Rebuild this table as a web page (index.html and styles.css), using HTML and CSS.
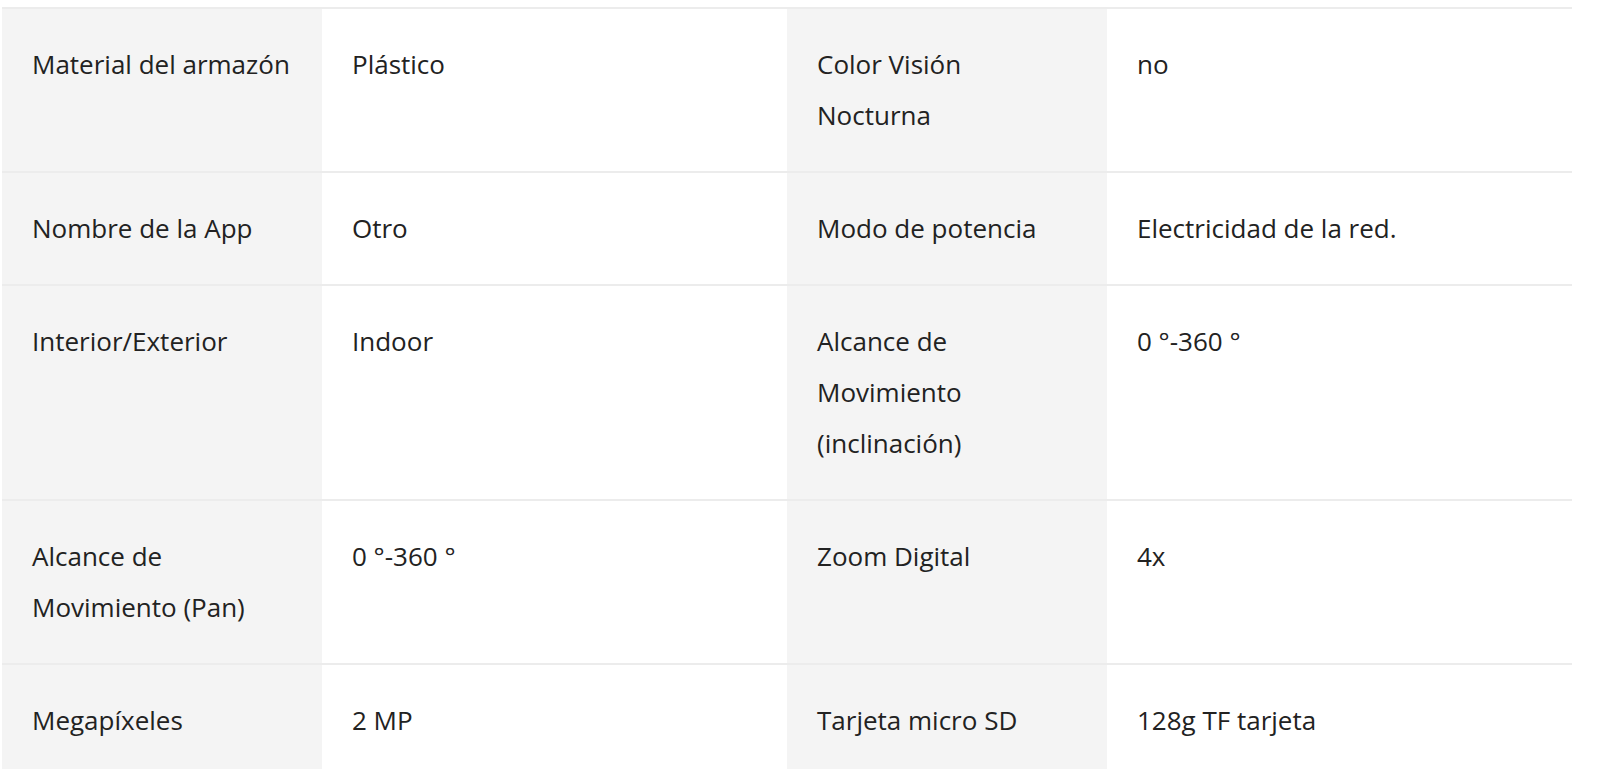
FILE: index.html
```html
<!DOCTYPE html>
<html lang="es">
<head>
<meta charset="utf-8">
<title>Especificaciones</title>
<link rel="stylesheet" href="styles.css">
</head>
<body>
<table class="specs">
  <colgroup>
    <col class="c-label"><col class="c-value"><col class="c-label"><col class="c-value">
  </colgroup>
  <tbody>
    <tr>
      <th>Material del armazón</th><td>Plástico</td>
      <th>Color Visión Nocturna</th><td>no</td>
    </tr>
    <tr>
      <th>Nombre de la App</th><td>Otro</td>
      <th>Modo de potencia</th><td>Electricidad de la red.</td>
    </tr>
    <tr>
      <th>Interior/Exterior</th><td>Indoor</td>
      <th>Alcance de Movimiento (inclinación)</th><td>0 °-360 °</td>
    </tr>
    <tr>
      <th>Alcance de Movimiento (Pan)</th><td>0 °-360 °</td>
      <th>Zoom Digital</th><td>4x</td>
    </tr>
    <tr>
      <th>Megapíxeles</th><td>2 MP</td>
      <th>Tarjeta micro SD</th><td>128g TF tarjeta</td>
    </tr>
  </tbody>
</table>
</body>
</html>
```
FILE: styles.css
```css
html, body {
  margin: 0;
  padding: 0;
  background: #ffffff;
}
body {
  padding: 7px 28px 0 2px;
  font-family: "Open Sans", "Noto Sans", sans-serif;
  color: #222222;
}
.specs {
  width: 1570px;
  border-collapse: collapse;
  table-layout: fixed;
}
.c-label { width: 320px; }
.c-value { width: 465px; }
.specs tr {
  border-top: 2px solid #ececec;
}
.specs th,
.specs td {
  padding: 30px;
  font-size: 26px;
  line-height: 51px;
  font-weight: 400;
  text-align: left;
  vertical-align: top;
}
.specs th {
  background: #f4f4f4;
}
.specs td {
  background: #ffffff;
}
```
